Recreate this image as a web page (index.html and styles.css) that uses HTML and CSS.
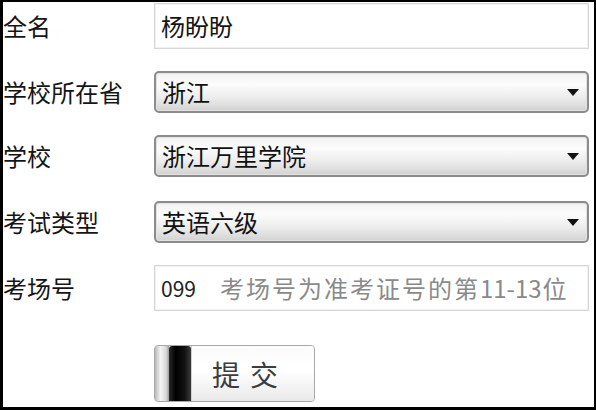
FILE: index.html
```html
<!DOCTYPE html>
<html lang="zh-CN">
<head>
<meta charset="utf-8">
<title>报名信息</title>
<link rel="stylesheet" href="styles.css">
</head>
<body>
<div class="frame">
  <div class="row">
    <div class="label">全名</div>
    <div class="field text-field">杨盼盼</div>
  </div>
  <div class="row">
    <div class="label">学校所在省</div>
    <div class="field select-field"><span class="value">浙江</span><svg class="arrow" width="12" height="7" viewBox="0 0 12 7"><path d="M0 0H12L6 7Z" fill="#111"/></svg></div>
  </div>
  <div class="row">
    <div class="label">学校</div>
    <div class="field select-field"><span class="value">浙江万里学院</span><svg class="arrow" width="12" height="7" viewBox="0 0 12 7"><path d="M0 0H12L6 7Z" fill="#111"/></svg></div>
  </div>
  <div class="row row-wide">
    <div class="label">考试类型</div>
    <div class="field select-field"><span class="value">英语六级</span><svg class="arrow" width="12" height="7" viewBox="0 0 12 7"><path d="M0 0H12L6 7Z" fill="#111"/></svg></div>
  </div>
  <div class="row">
    <div class="label">考场号</div>
    <div class="field text-field"><span class="num">099</span><span class="hint">考场号为准考证号的第<span class="hint-num">11-13</span>位</span></div>
  </div>
  <div class="actions">
    <button class="submit" type="button"><span class="grip-left"></span><span class="grip"></span><span class="btn-body">提交</span></button>
  </div>
</div>
</body>
</html>
```
FILE: styles.css
```css
html, body {
  margin: 0;
  padding: 0;
  background: #fff;
}
.frame {
  width: 596px;
  height: 410px;
  box-sizing: border-box;
  border-top: 2px solid #000;
  border-left: 3px solid #000;
  border-right: 2px solid #000;
  border-bottom: 3px solid #000;
  padding: 1px 5px 0 0;
  display: flex;
  flex-direction: column;
  gap: 22px;
  font-family: "Noto Sans CJK SC", "Noto Sans", sans-serif;
  font-size: 24px;
  color: #151515;
}
.row {
  display: grid;
  grid-template-columns: 151px 1fr;
  align-items: center;
}
.row-wide {
  margin-top: 2px;
}
.label {
  line-height: 1;
  white-space: nowrap;
}
.field {
  box-sizing: border-box;
  display: flex;
  align-items: center;
  padding-left: 6px;
  line-height: 1;
  white-space: nowrap;
}
.text-field {
  height: 46px;
  border: 1px solid #d6d6d6;
  box-shadow: inset 0 0 0 1px #f1f1f1;
  background: #fff;
}
.select-field {
  height: 42px;
  border: 2px solid #8c8c8c;
  border-radius: 5px;
  box-shadow: inset 0 0 0 1px #e2e2e2;
  background: linear-gradient(#f2f2f2 0%, #fcfcfc 30%, #ececec 65%, #d2d2d2 100%);
  color: #111;
}
.arrow {
  margin-left: auto;
  margin-right: 8px;
}
.num {
  color: #222;
  font-size: 21px;
  margin-right: 24px;
}
.hint {
  color: #8a8a8a;
  letter-spacing: 2px;
}
.hint-num {
  letter-spacing: 0;
  margin-right: 1px;
}
.actions {
  padding-left: 151px;
  padding-top: 12px;
}
.submit {
  display: flex;
  width: 161px;
  height: 57px;
  padding: 0;
  border: 1px solid #a8a8a8;
  border-radius: 4px;
  background: linear-gradient(#f4f4f4, #ffffff 40%, #ececec);
  overflow: hidden;
  cursor: pointer;
}
.grip-left {
  width: 14px;
  height: 100%;
  background: linear-gradient(90deg, #b9b9b9, #f4f4f4 40%, #d6d6d6 80%, #9a9a9a);
}
.grip {
  width: 22px;
  height: 100%;
  border-radius: 3px 3px 0 0;
  background: linear-gradient(90deg, #2a2a2a, #000 30%, #111 70%, #3a3a3a);
}
.btn-body {
  flex: 1;
  display: flex;
  align-items: center;
  padding-left: 20px;
  font-family: "Noto Sans CJK SC", sans-serif;
  font-weight: 400;
  font-size: 28px;
  letter-spacing: 10px;
  color: #3c3c3c;
  background: linear-gradient(#fbfbfb, #ffffff 45%, #e9e9e9);
  border-left: 1px solid #cfcfcf;
}
```
